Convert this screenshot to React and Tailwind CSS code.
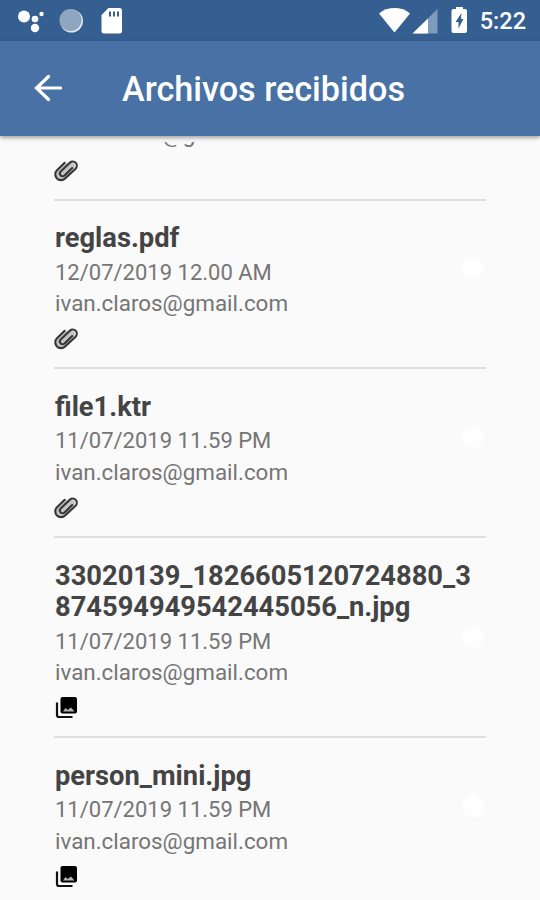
const files = [
  { id: 1, type: 'file' },
  { id: 2, name: ['reglas.pdf'], date: '12/07/2019 12.00 AM', type: 'file' },
  { id: 3, name: ['file1.ktr'], date: '11/07/2019 11.59 PM', type: 'file' },
  { id: 4, name: ['33020139_1826605120724880_3', '874594949542445056_n.jpg'], date: '11/07/2019 11.59 PM', type: 'image' },
  { id: 5, name: ['person_mini.jpg'], date: '11/07/2019 11.59 PM', type: 'image' },
];

function ClipIcon() {
  return (
    <svg viewBox="0 0 24 22" className="h-[22px] w-6" fill="none" strokeLinecap="round" strokeLinejoin="round">
      <path d="M2 12 10 4 17 2 21.500 5 20 9 10 19 5 20.500 2 16z" fill="#c4c4c4" />
      <path
        d="M10.700 2.800 3 10.300a5.700 5.700 0 0 0 8.100 8.200L21.600 8.700a4.100 4.100 0 0 0-5.800-5.900L6.700 11.500a2.700 2.700 0 0 0 3.900 3.900l7.600-7.300"
        stroke="#363636"
        strokeWidth="2.100"
      />
    </svg>
  );
}

function GalleryIcon() {
  return (
    <svg viewBox="0 0 24 24" className="size-6" fill="none">
      <path d="M3 6.500V19a2 2 0 0 0 2 2H18.500" stroke="#111" strokeWidth="2.200" />
      <rect x="6.500" y="1" width="16.500" height="16.500" rx="2" fill="#000" />
      <path d="M9 15.500 11.500 12 13.700 14 17 11.500 20.500 15.500z" fill="#b5b5b5" />
    </svg>
  );
}

function StatusBar() {
  return (
    <div className="flex h-[41px] shrink-0 items-center justify-between bg-[#365f91] text-white">
      <svg viewBox="0 0 130 41" className="h-[41px] w-[130px]">
        <circle cx="24" cy="16.500" r="6" fill="#fff" />
        <circle cx="35" cy="19" r="3.300" fill="#fff" />
        <circle cx="35" cy="28" r="4.200" fill="#fff" />
        <circle cx="41.500" cy="14" r="2.200" fill="#fff" />
        <circle cx="71.500" cy="21" r="11.500" fill="#dde6ef" />
        <circle cx="70.500" cy="20" r="11" fill="#8fa5c0" />
        <path fill="#fff" d="M108.500 8H119.500a2.500 2.500 0 0 1 2.500 2.500V31a2.500 2.500 0 0 1-2.500 2.500H104a2.500 2.500 0 0 1-2.500-2.500V15z" />
        <path stroke="#365f91" strokeWidth="2" d="M110 11.500v5M114 11.500v5M118 11.500v5" />
      </svg>
      <div className="flex items-center pr-[14px]">
        <svg viewBox="374.5 0 100 41" className="mr-[5px] h-[41px] w-[100px]">
          <path fill="#fff" d="M378.500 13.500c8.500-7.300 22.500-7.300 31 0L394 32.500z" />
          <path fill="#7f9bbb" d="M437 9v24.500h-25z" />
          <path fill="#fff" d="M427.500 18.500v15H412z" />
          <path fill="#fff" d="M455.500 7h7v2h2a2 2 0 0 1 2 2V31a2 2 0 0 1-2 2h-11.500a2 2 0 0 1-2-2V11a2 2 0 0 1 2-2h2.500z" />
          <path fill="#365f91" d="m461 13-6 9h3v6.500l4.900-9.500h-2.400z" />
        </svg>
        <span className="pt-[3px] text-[23.5px] leading-none font-medium">5:22</span>
      </div>
    </div>
  );
}

function FileRow({ file }) {
  return (
    <div className="border-b-2 border-[#dedede] pt-[22.75px] pb-4 text-[#757575]">
      {file.name && (
        <h2 className="pl-px text-[27.3px] leading-[31.5px] font-bold text-[#444]">
          {file.name.map((line) => (
            <span key={line} className="block">{line}</span>
          ))}
        </h2>
      )}
      {file.date && (
        <div className="mt-[1.5px] flex h-[31.5px] items-center justify-between pr-0.5 pl-px">
          <p className="text-[22px]">{file.date}</p>
          <span className="-mt-2 size-[22px] rounded-full bg-[#fefefe]"></span>
        </div>
      )}
      <p className="pl-px text-[22.4px] leading-[31.5px]">ivan.claros@gmail.com</p>
      <div className="mt-2 flex h-6 items-center">
        {file.type === 'image' ? <GalleryIcon /> : <ClipIcon />}
      </div>
    </div>
  );
}

export default function App() {
  return (
    <div className="flex h-[900px] w-[540px] flex-col overflow-hidden bg-[#fafafa] font-['Roboto',sans-serif]">
      <StatusBar />
      <header className="flex h-[94.5px] shrink-0 items-center bg-[#4872a6] text-white shadow-[0_2px_4px_rgba(0,0,0,0.35)]">
        <svg viewBox="0 0 28 28" className="ml-[34px] size-7" fill="none" stroke="#fff" strokeWidth="3.200" strokeLinecap="round">
          <path d="M26.500 14H3M14.500 2.500 2.500 14 14.500 25.500" />
        </svg>
        <h1 className="ml-[60px] pt-0.5 text-[34.2px] font-medium">Archivos recibidos</h1>
      </header>
      <main className="mt-[6.5px] flex-1 overflow-hidden px-[54px]">
        <div className="-mt-[45.75px]">
          {files.map((file) => (
            <FileRow key={file.id} file={file} />
          ))}
        </div>
      </main>
    </div>
  );
}
